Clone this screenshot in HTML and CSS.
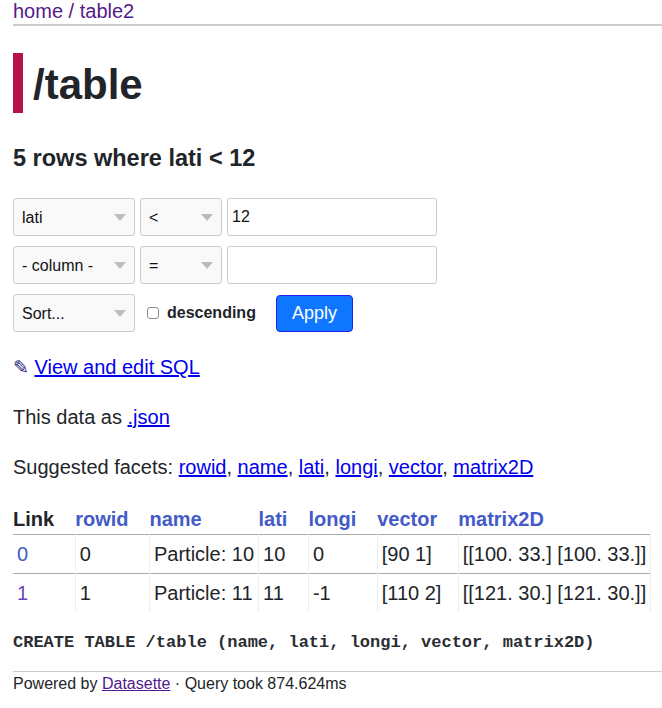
FILE: index.html
```html
<!DOCTYPE html>
<html lang="en">
<head>
<meta charset="utf-8">
<title>table2: /table</title>
<link rel="stylesheet" href="styles.css">
</head>
<body>
<div class="hd">
  <p class="crumbs"><a href="#">home</a> / <a href="#">table2</a></p>
</div>

<div class="bd">
  <h1 class="db-title">/table</h1>
  <h3 class="count">5 rows where lati &lt; 12</h3>

  <form class="filters" action="#">
    <div class="filter-row">
      <span class="select-wrapper col"><select><option>lati</option></select></span>
      <span class="select-wrapper op"><select><option>&lt;</option></select></span>
      <input class="filter-value" type="text" value="12">
    </div>
    <div class="filter-row">
      <span class="select-wrapper col"><select><option>- column -</option></select></span>
      <span class="select-wrapper op"><select><option>=</option></select></span>
      <input class="filter-value" type="text" value="">
    </div>
    <div class="filter-row last">
      <span class="select-wrapper col"><select><option>Sort...</option></select></span>
      <label class="sort-desc"><input type="checkbox" class="check"> descending</label>
      <input type="submit" class="apply" value="Apply">
    </div>
  </form>

  <p class="sql-link"><a class="not-underlined" href="#"><span class="pencil">✎</span> <span class="underlined">View and edit SQL</span></a></p>
  <p>This data as <a href="#">.json</a></p>
  <p>Suggested facets: <a href="#">rowid</a>, <a href="#">name</a>, <a href="#">lati</a>, <a href="#">longi</a>, <a href="#">vector</a>, <a href="#">matrix2D</a></p>

  <table class="rows">
    <thead>
      <tr>
        <th>Link</th>
        <th><a href="#">rowid</a></th>
        <th><a href="#">name</a></th>
        <th><a href="#">lati</a></th>
        <th><a href="#">longi</a></th>
        <th><a href="#">vector</a></th>
        <th><a href="#">matrix2D</a></th>
      </tr>
    </thead>
    <tbody>
      <tr>
        <td><a href="#">0</a></td>
        <td>0</td>
        <td>Particle: 10</td>
        <td>10</td>
        <td>0</td>
        <td>[90 1]</td>
        <td>[[100. 33.] [100. 33.]]</td>
      </tr>
      <tr>
        <td><a href="#" class="seen">1</a></td>
        <td>1</td>
        <td>Particle: 11</td>
        <td>11</td>
        <td>-1</td>
        <td>[110 2]</td>
        <td>[[121. 30.] [121. 30.]]</td>
      </tr>
    </tbody>
  </table>

  <pre class="create">CREATE TABLE /table (name, lati, longi, vector, matrix2D)</pre>
</div>

<div class="ft">Powered by <a href="#">Datasette</a> · Query took 874.624ms</div>
</body>
</html>
```

FILE: styles.css
```css
* {
  box-sizing: border-box;
}

body {
  margin: 0 0 0 13px;
  font-family: "Liberation Sans", Arial, Helvetica, sans-serif;
  font-size: 20px;
  line-height: 1.5;
  color: #212529;
  background: #fff;
}

a {
  color: #0000ee;
}

/* header */
.hd {
  border-bottom: 2px solid #ccc;
  padding-bottom: 2px;
}

.crumbs {
  margin: 0;
  line-height: 22px;
  color: #551a8b;
}

.crumbs a {
  color: #551a8b;
  text-decoration: none;
}

/* titles */
.db-title {
  margin: 27px 0 0;
  padding: 3px 0 0 10px;
  border-left: 10px solid #b5134b;
  font-size: 42px;
  line-height: 57px;
  font-weight: 700;
  color: #212529;
}

.count {
  margin: 31px 0 0;
  font-size: 23.5px;
  line-height: 28px;
  font-weight: 700;
}

/* filters */
.filters {
  margin: 26px 0 0;
}

.filter-row {
  display: flex;
  align-items: center;
  height: 38px;
  margin-bottom: 10px;
}

.filter-row.last {
  margin-bottom: 0;
}

.select-wrapper {
  position: relative;
  display: block;
  height: 38px;
  border: 1px solid #ccc;
  border-radius: 3px;
  background: #f9f9f9;
  margin-right: 5px;
}

.select-wrapper.col {
  width: 122px;
}

.select-wrapper.op {
  width: 82px;
}

.select-wrapper::after {
  content: "";
  position: absolute;
  right: 8px;
  top: 15px;
  width: 12px;
  height: 7px;
  background: #bbb;
  clip-path: polygon(0 0, 100% 0, 50% 100%);
  pointer-events: none;
}

.select-wrapper select {
  -webkit-appearance: none;
  appearance: none;
  display: block;
  width: 100%;
  height: 36px;
  border: 0;
  margin: 0;
  background: transparent;
  padding: 0 22px 0 8px;
  font-family: "Liberation Sans", Arial, sans-serif;
  font-size: 16px;
  color: #111;
}

.filter-value {
  width: 210px;
  height: 38px;
  margin: 0;
  border: 1px solid #ccc;
  border-radius: 3px;
  padding: 0 4px;
  background: #fff;
  font-family: "Liberation Sans", Arial, sans-serif;
  font-size: 16px;
  color: #111;
}

.sort-desc {
  display: flex;
  align-items: center;
  font-size: 16px;
  font-weight: 700;
  line-height: 18px;
  margin-left: 7px;
}

.check {
  -webkit-appearance: none;
  appearance: none;
  width: 12px;
  height: 12px;
  margin: 0 8px 0 0;
  border: 1px solid #8c8c8c;
  border-radius: 3px;
  background: #fff;
}

.apply {
  -webkit-appearance: none;
  appearance: none;
  height: 37px;
  margin: 0 0 0 20px;
  padding: 0 15px;
  border: 1px solid #2222ee;
  border-radius: 4px;
  background: #0f76ff;
  color: #fff;
  font-family: "Liberation Sans", Arial, sans-serif;
  font-size: 18px;
  line-height: 1;
}

/* paragraphs */
p {
  margin: 20px 0;
}

.not-underlined {
  text-decoration: none;
}

.underlined {
  text-decoration: underline;
}

.pencil {
  font-family: "DejaVu Sans", sans-serif;
  font-size: 19px;
  color: #26267a;
}

/* table */
.rows {
  border-collapse: collapse;
  margin-top: 22px;
}

.rows th {
  padding: 0 21px 0 0;
  text-align: left;
  white-space: nowrap;
  font-weight: 700;
  line-height: 30px;
}

.rows th a {
  color: #445ac8;
  text-decoration: none;
}

.rows td {
  border-top: 1px solid #aaa;
  border-right: 1px solid #eee;
  padding: 4px;
  vertical-align: top;
  white-space: pre-wrap;
  line-height: 30px;
}

.rows td a {
  color: #445ac8;
  text-decoration: none;
}

.rows td a.seen {
  color: #6a45bd;
}

/* schema */
.create {
  margin: 18px 0 16px;
  font-family: "Liberation Mono", "Courier New", monospace;
  font-size: 17px;
  font-weight: 700;
  line-height: 25px;
  white-space: pre-wrap;
  color: #2a2d31;
}

/* footer */
.ft {
  border-top: 1px solid #ccc;
  font-size: 16px;
  line-height: 24px;
}

.ft a {
  color: #551a8b;
}
```
